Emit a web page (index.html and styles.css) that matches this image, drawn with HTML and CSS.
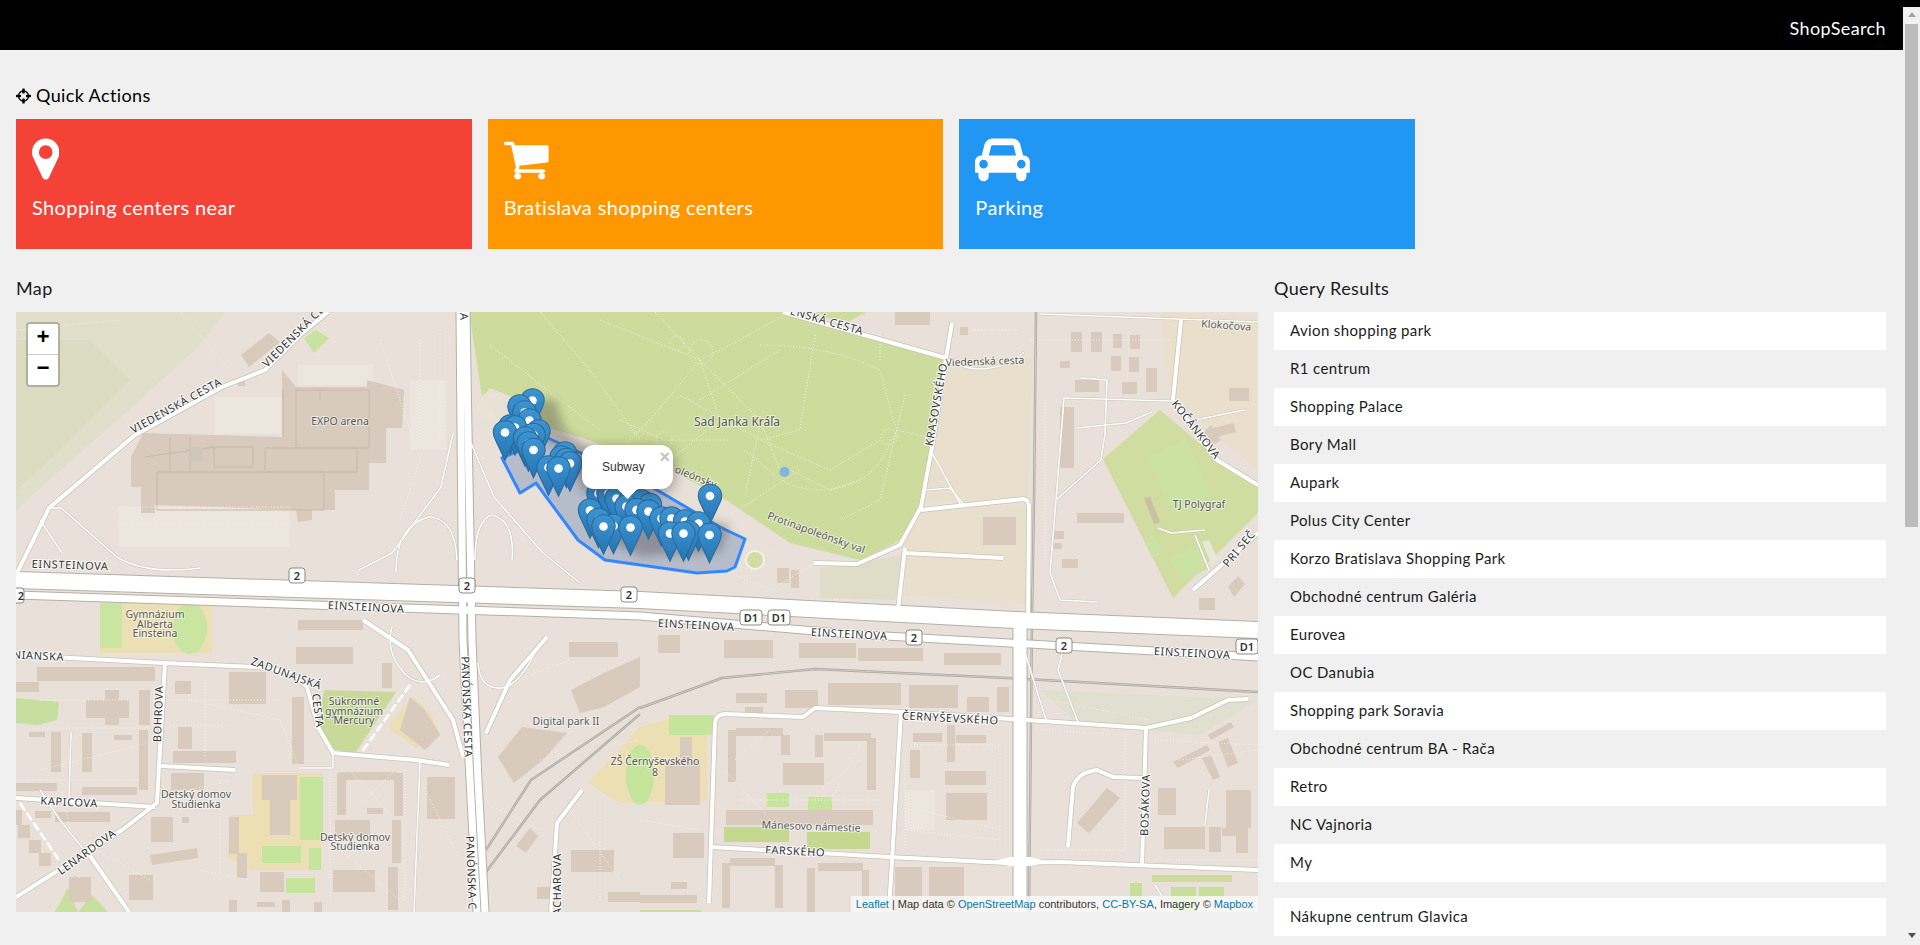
FILE: index.html
```html
<!DOCTYPE html>
<html>
<head>
    <meta charset="utf-8">
    <title>ShopSearch</title>
    <link rel="stylesheet" href="styles.css">
</head>

<body>
<div class="page">
    <header class="topbar"><span>ShopSearch</span></header>

    <main class="content">
        <h5 class="quick_title">
            <svg class="quick_icon" viewBox="0 0 1536 1792"><path d="M1197 1024h-109q-26 0-45-19t-19-45v-128q0-26 19-45t45-19h109q-32-108-112.500-188.500t-188.500-112.500v109q0 26-19 45t-45 19h-128q-26 0-45-19t-19-45v-109q-108 32-188.500 112.500t-112.500 188.500h109q26 0 45 19t19 45v128q0 26-19 45t-45 19h-109q32 108 112.500 188.500t188.500 112.500v-109q0-26 19-45t45-19h128q26 0 45 19t19 45v109q108-32 188.500-112.500t112.500-188.500zm339-192v128q0 26-19 45t-45 19h-143q-37 161-154.500 278.500t-278.500 154.500v143q0 26-19 45t-45 19h-128q-26 0-45-19t-19-45v-143q-161-37-278.500-154.500t-154.500-278.500h-143q-26 0-45-19t-19-45v-128q0-26 19-45t45-19h143q37-161 154.500-278.500t278.500-154.500v-143q0-26 19-45t45-19h128q26 0 45 19t19 45v143q161 37 278.500 154.500t154.500 278.500h143q26 0 45 19t19 45z"/></svg>
            Quick Actions
        </h5>

        <div class="cards">
            <div class="card card_red">
                <svg class="card_icon" viewBox="0 0 1024 1792"><path d="M768 640q0-106-75-181t-181-75-181 75-75 181 75 181 181 75 181-75 75-181zm256 0q0 109-33 179l-364 774q-16 33-47.500 52t-67.500 19-67.500-19-46.500-52l-365-774q-33-70-33-179 0-212 150-362t362-150 362 150 150 362z"/></svg>
                <h4>Shopping centers near</h4>
            </div>
            <div class="card card_orange">
                <svg class="card_icon" viewBox="64 0 1792 1792"><path d="M704 1536q0 52-38 90t-90 38-90-38-38-90 38-90 90-38 90 38 38 90zm896 0q0 52-38 90t-90 38-90-38-38-90 38-90 90-38 90 38 38 90zm128-1088v512q0 24-16.500 42.500t-40.500 21.500l-1044 122q13 60 13 70 0 16-24 64h920q26 0 45 19t19 45-19 45-45 19h-1024q-26 0-45-19t-19-45q0-11 8-31.500t16-36 21.500-40 15.500-29.500l-177-823h-204q-26 0-45-19t-19-45 19-45 45-19h256q16 0 28.500 6.500t19.500 15.500 13 24.500 8 26 5.500 29.500 4.500 26h1201q26 0 45 19t19 45z"/></svg>
                <h4>Bratislava shopping centers</h4>
            </div>
            <div class="card card_blue">
                <svg class="card_icon" viewBox="0 0 2048 1792"><path d="M480 1088q0-66-47-113t-113-47-113 47-47 113 47 113 113 47 113-47 47-113zm36-320h1016l-89-357q-2-8-14-17.500t-21-9.500h-768q-9 0-21 9.500t-14 17.500zm1372 320q0-66-47-113t-113-47-113 47-47 113 47 113 113 47 113-47 47-113zm160-96v384q0 14-9 23t-23 9h-96v128q0 80-56 136t-136 56-136-56-56-136v-128h-1024v128q0 80-56 136t-136 56-136-56-56-136v-128h-96q-14 0-23-9t-9-23v-384q0-93 65.500-158.500t158.500-65.500h28l105-419q23-94 104-157.500t179-63.500h768q98 0 179 63.500t104 157.500l105 419h28q93 0 158.500 65.500t65.500 158.500z"/></svg>
                <h4>Parking</h4>
            </div>
        </div>

        <div class="columns">
            <section>
                <h5 class="section_title">Map</h5>
                <div class="map">
                    <svg class="map_tiles" viewBox="16 312 1242 600">
                        <defs>
                            <linearGradient id="pin_fill" x1="0" y1="0" x2="0" y2="1">
                                <stop offset="0" stop-color="#3d94d1"/>
                                <stop offset="1" stop-color="#2574b4"/>
                            </linearGradient>
                            <filter id="soft"><feGaussianBlur stdDeviation="5"/></filter>
                            <g id="pin">
                                <path d="M12.500 .8C5.800 .8 .8 6 .8 12.500c0 2.800 1 5.200 2.300 7.700L12.500 40.300l9.400-20.100c1.300-2.500 2.300-4.900 2.300-7.700C24.200 6 19.200 .8 12.500 .8z" fill="url(#pin_fill)" stroke="#2a6a9c" stroke-width="1.100"/>
                                <circle cx="12.500" cy="12.500" r="4.300" fill="#fff"/>
                            </g>
                            <g id="roads_major">
                                <path d="M16 580L640 600L1015 620L1258 630"/>
                            </g>
                            <g id="roads_major2">
                                <path d="M16 595L640 616L850 634L1064 646L1190 653L1258 657"/>
                                <path d="M460 312L461 430L463 640L470 780L477 912"/>
                                <path d="M466 312L468 430L472 640L478 780L485 912"/>
                                <path d="M1017 620L1017 912"/>
                                <path d="M1023 620L1023 912"/>
                            </g>
                            <g id="roads_mid">
                                <path d="M16 575L49 508L135 435L222 387L265 370L300 335L328 312"/>
                                <path d="M783 312L946 358"/>
                                <path d="M952 323L946 358L932 447L921 507L900 545L857 564L814 563"/>
                                <path d="M921 510L967 505L1024 499Q1029 500 1029 508L1028 620"/>
                                <path d="M905 548L898 610"/>
                                <path d="M905 553L1003 558"/>
                                <path d="M16 655L163 663L257 667L290 672L307 687L318 727L333 753L416 760L449 765"/>
                                <path d="M165 663L159 767L157 803L122 830L16 897"/>
                                <path d="M16 798L155 807"/>
                                <path d="M161 766L235 770"/>
                                <path d="M711 847L889 857L1007 863L1060 862L1258 870"/>
                                <path d="M709 903L715 723Q716 714 725 714L803 717L815 708L901 712L1011 719L1146 728L1191 718L1228 700L1248 699"/>
                                <path d="M901 712L889 910"/>
                                <path d="M1146 728L1142 865"/>
                                <path d="M1068 847L1073 787Q1078 772 1097 770L1113 777L1142 778"/>
                                <path d="M1181 320L1173 400L1217 460L1258 485"/>
                                <path d="M1258 533L1193 590"/>
                                <path d="M363 620L408 650L453 720L463 757"/>
                                <path d="M547 637L510 680L486 733"/>
                                <path d="M582 790L557 823L551 912"/>
                                <path d="M88 853L129 912"/>
                            </g>
                            <g id="roads_minor">
                                <path d="M49 508L61 508L118 558Q150 575 200 568"/>
                                <path d="M40 520L62 553"/>
                                <path d="M453 433L441 487L392 553L359 570"/>
                                <path d="M471 443L494 497L543 553L580 583"/>
                                <path d="M396 572Q396 525 429 517Q455 518 457 560"/>
                                <path d="M475 560Q475 520 492 515Q515 520 512 560"/>
                                <path d="M392 627Q385 650 403 672Q420 690 440 675"/>
                                <path d="M478 663Q480 690 502 688Q520 685 536 650"/>
                                <path d="M300 768L333 768L333 753"/>
                                <path d="M71 732L69 797"/>
                                <path d="M420 762L414 912"/>
                                <path d="M948 360Q970 372 990 368Q1010 365 1024 352"/>
                                <path d="M1040 314L1258 322"/>
                                <path d="M1021 640L1046 720"/>
                                <path d="M1055 640L1064 645L1058 670L1078 722"/>
                                <path d="M1209 790L1205 825"/>
                                <path d="M1155 885L1172 912"/>
                                <path d="M88 855L60 820L40 790"/>
                                <path d="M926 490L950 488L966 507"/>
                                <path d="M932 453L962 507"/>
                                <path d="M1064 398L1171 401"/>
                                <path d="M1064 398L1056 500L1050 573L1060 600L1097 602"/>
                                <path d="M1081 378L1107 380L1105 433L1101 460L1056 500"/>
                                <path d="M1077 428L1126 423L1152 412"/>
                                <path d="M1195 420L1244 410"/>
                                <path d="M1158 528L1171 533L1205 530"/>
                                <path d="M1195 535L1209 570"/>
                            </g>
                        </defs>

                        <rect x="16" y="312" width="1242" height="600" fill="#e8e0d9"/>

                        <!-- landuse -->
                        <polygon points="16,312 225,312 200,345 140,400 60,470 16,510" fill="#e1dec9"/>
                        <polygon points="16,340 90,340 130,380 60,450 16,490" fill="#dcdcc2"/>
                        <polygon points="946,358 1032,358 1028,500 925,503" fill="#e8e0cd"/>
                        <polygon points="905,510 1028,505 1028,605 905,595" fill="#e8e0cd"/>
                        <polygon points="820,568 905,555 895,600 820,598" fill="#dfdcc8"/>
                        <polygon points="1160,312 1258,318 1258,470 1170,395" fill="#eadfca"/>
                        <polygon points="1040,690 1258,700 1200,735 1080,725" fill="#e1dfd0"/>
                        <polygon points="469,312 783,312 946,358 932,447 926,470 921,507 901,540 860,560 790,543 726,500 689,480 670,470 583,438 547,427 515,398 490,388 482,397" fill="#cddb9c"/>
                        <polygon points="805,312 866,312 850,321 825,318" fill="#cddb9c"/>
                        <ellipse cx="490" cy="407" rx="13" ry="14" fill="#e9e3d4"/>
                        <polygon points="515,398 490,402 505,430 548,445 600,470 680,515 760,545 795,555 740,530 680,490 610,450 548,430" fill="#e7e1d5"/>
                        <polygon points="1103,459 1160,410 1211,453 1258,487 1258,513 1173,598" fill="#d1dca0"/>
                        <polygon points="1146,458 1186,438 1211,495 1175,517" fill="#cbe2a4"/>
                        <polygon points="1168,558 1199,543 1209,568 1183,582" fill="#cbe2a4"/>
                        <polygon points="1144,538 1154,535 1162,553 1152,558" fill="#cbe2a4"/>
                        <polygon points="1202,542 1209,540 1218,560 1211,563" fill="#e8e8d8"/>
                        <polygon points="1144,498 1150,497 1160,522 1154,524" fill="#c9bfa5"/>
                        <circle cx="755" cy="560" r="9" fill="#d3dca5" stroke="#f4f1ea" stroke-width="2"/>
                        <ellipse cx="784.500" cy="472" rx="5" ry="5" fill="#7db5e3"/>
                        <rect x="100" y="603" width="112" height="50" fill="#ecdfb4"/>
                        <rect x="100" y="603" width="22" height="45" fill="#c9e5a0"/>
                        <ellipse cx="190" cy="628" rx="17" ry="26" fill="#c9e5a0"/>
                        <polygon points="324,690 396,692 355,753 327,748 318,727" fill="#c8d99a"/>
                        <polygon points="388,727 412,697 429,710 439,733 416,748" fill="#ecdfb4"/>
                        <polygon points="16,698 59,702 57,720 37,725 16,723" fill="#c6df9e"/>
                        <polygon points="253,773 322,773 322,870 253,870 227,857 231,815 253,815" fill="#ecdfb4"/>
                        <rect x="300" y="777" width="23" height="63" fill="#c6e59c"/>
                        <rect x="262" y="846" width="39" height="17" fill="#c6e59c"/>
                        <rect x="309" y="848" width="12" height="22" fill="#c6e59c"/>
                        <rect x="286" y="878" width="29" height="15" fill="#c6e59c"/>
                        <polygon points="55,912 68,888 78,912" fill="#c8df9e"/>
                        <polygon points="78,912 92,895 108,912" fill="#c8df9e"/>
                        <polygon points="588,783 640,727 681,715 707,720 707,800 620,803" fill="#ecdfb4"/>
                        <ellipse cx="640" cy="775" rx="14" ry="30" fill="#c6e59c"/>
                        <rect x="669" y="715" width="45" height="20" fill="#c6e59c"/>
                        <rect x="767" y="793" width="22" height="14" fill="#c6e59c"/>
                        <rect x="808" y="797" width="24" height="15" fill="#c6e59c"/>
                        <rect x="724" y="827" width="65" height="15" fill="#c5d88f"/>
                        <rect x="807" y="832" width="63" height="17" fill="#c5d88f"/>
                        <rect x="1152" y="875" width="80" height="7" fill="#cddb9c"/>
                        <rect x="1130" y="883" width="12" height="20" fill="#c6e09c"/>
                        <rect x="1171" y="887" width="25" height="25" fill="#c6e09c"/>
                        <rect x="1199" y="887" width="25" height="10" fill="#c6e09c"/>
                        <rect x="640" y="910" width="61" height="2" fill="#cddb9c"/>
                        <polygon points="304,338 316,330 329,338 314,353" fill="#c8e29f"/>

                        <!-- paved light areas -->
                        <g fill="#ece6de">
                            <rect x="118" y="507" width="172" height="40"/>
                            <rect x="214" y="397" width="80" height="37"/>
                            <rect x="298" y="365" width="75" height="20"/>
                            <rect x="410" y="380" width="36" height="70"/>
                            <rect x="905" y="790" width="30" height="40"/>
                        </g>

                        <!-- buildings -->
                        <g fill="#d8cabc">
                            <polygon points="131,457 143,433 282,437 282,370 296,387 367,387 367,380 404,390 402,428 386,428 386,463 369,463 369,490 335,490 335,510 312,510 312,520 298,522 296,510 155,505 155,513 141,513 141,487 131,487"/>
                            <polygon points="241,355 269,333 280,342 249,367"/>
                            <rect x="238" y="378" width="7" height="8"/>
                            <rect x="1071" y="332" width="11" height="20"/><rect x="1091" y="332" width="11" height="20"/>
                            <rect x="1113" y="334" width="9" height="14"/><rect x="1130" y="335" width="10" height="14"/>
                            <rect x="1111" y="356" width="10" height="15"/><rect x="1129" y="357" width="10" height="15"/>
                            <rect x="1060" y="361" width="10" height="7"/><rect x="1146" y="368" width="11" height="24"/>
                            <rect x="1075" y="380" width="24" height="12"/><rect x="1122" y="382" width="15" height="12"/>
                            <rect x="1229" y="388" width="20" height="13"/><rect x="1060" y="407" width="14" height="61"/>
                            <rect x="1077" y="513" width="47" height="10"/><rect x="1054" y="531" width="10" height="8"/>
                            <rect x="1054" y="543" width="8" height="6"/><rect x="1062" y="559" width="16" height="9"/>
                            <rect x="983" y="517" width="33" height="28"/><rect x="777" y="568" width="12" height="15"/>
                            <rect x="791" y="570" width="8" height="18"/><rect x="1199" y="598" width="16" height="12"/>
                            <rect x="895" y="312" width="35" height="13"/><rect x="960" y="327" width="8" height="8"/>
                            <polygon points="1203,433 1211,425 1221,440 1212,446"/><polygon points="1213,428 1234,423 1236,432 1216,437"/>
                            <polygon points="1228,587 1238,576 1245,584 1234,597"/>
                            <rect x="37" y="667" width="118" height="14"/><rect x="16" y="682" width="23" height="10"/>
                            <rect x="175" y="681" width="16" height="13"/><rect x="229" y="672" width="37" height="32"/>
                            <rect x="292" y="697" width="12" height="67"/><rect x="139" y="690" width="11" height="35"/>
                            <rect x="86" y="700" width="43" height="18"/><rect x="105" y="690" width="14" height="35"/>
                            <rect x="51" y="732" width="10" height="40"/><rect x="82" y="733" width="10" height="39"/>
                            <rect x="29" y="732" width="16" height="5"/><rect x="114" y="735" width="18" height="5"/>
                            <rect x="139" y="730" width="9" height="60"/><rect x="173" y="751" width="63" height="12"/>
                            <rect x="178" y="727" width="14" height="22"/><rect x="16" y="783" width="41" height="8"/>
                            <rect x="82" y="787" width="55" height="8"/><rect x="171" y="773" width="33" height="17"/>
                            <rect x="55" y="812" width="55" height="10"/><rect x="35" y="811" width="16" height="7"/>
                            <rect x="16" y="810" width="6" height="15"/><rect x="151" y="817" width="22" height="25"/>
                            <rect x="182" y="817" width="7" height="6"/>
                            <polygon points="150,855 197,848 198,858 152,865"/>
                            <rect x="18" y="825" width="12" height="13"/><rect x="29" y="840" width="12" height="13"/><rect x="39" y="853" width="12" height="13"/>
                            <rect x="262" y="775" width="35" height="25"/><rect x="270" y="800" width="20" height="35"/>
                            <rect x="229" y="817" width="10" height="37"/><rect x="237" y="853" width="10" height="25"/>
                            <rect x="260" y="872" width="24" height="20"/>
                            <rect x="339" y="772" width="57" height="8"/><rect x="337" y="773" width="9" height="42"/><rect x="394" y="773" width="9" height="43"/>
                            <rect x="392" y="820" width="9" height="43"/><rect x="388" y="867" width="10" height="43"/>
                            <rect x="335" y="820" width="35" height="15"/><rect x="367" y="808" width="16" height="6"/>
                            <rect x="333" y="870" width="42" height="22"/><rect x="427" y="777" width="28" height="42"/>
                            <rect x="69" y="877" width="22" height="25"/><rect x="129" y="875" width="24" height="25"/>
                            <rect x="229" y="900" width="8" height="12"/><rect x="257" y="902" width="18" height="5"/>
                            <rect x="282" y="900" width="8" height="12"/><rect x="314" y="902" width="8" height="10"/>
                            <rect x="298" y="620" width="65" height="10"/><rect x="296" y="647" width="57" height="17"/>
                            <rect x="382" y="663" width="10" height="25"/>
                            <polygon points="410,697 425,710 440,735 425,750 400,730"/>
                            <rect x="569" y="642" width="49" height="15"/>
                            <polygon points="498,757 522,727 567,733 543,760 514,783"/>
                            <polygon points="571,690 604,673 640,657 640,687 604,707 580,713"/>
                            <polygon points="516,846 530,828 538,836 526,853"/>
                            <rect x="571" y="850" width="43" height="22"/><rect x="537" y="887" width="14" height="12"/>
                            <rect x="608" y="892" width="32" height="10"/>
                            <rect x="658" y="635" width="22" height="18"/><rect x="724" y="640" width="49" height="18"/>
                            <rect x="799" y="643" width="57" height="15"/><rect x="858" y="648" width="65" height="13"/>
                            <rect x="944" y="653" width="57" height="12"/><rect x="736" y="693" width="31" height="10"/>
                            <rect x="785" y="690" width="33" height="18"/><rect x="828" y="683" width="73" height="22"/>
                            <rect x="909" y="685" width="49" height="23"/><rect x="967" y="697" width="22" height="15"/>
                            <rect x="997" y="687" width="12" height="25"/><rect x="745" y="707" width="18" height="7"/>
                            <rect x="728" y="730" width="8" height="52"/><rect x="736" y="728" width="47" height="8"/><rect x="781" y="735" width="9" height="20"/>
                            <rect x="815" y="735" width="8" height="22"/><rect x="824" y="733" width="47" height="8"/><rect x="867" y="738" width="9" height="52"/>
                            <rect x="783" y="763" width="41" height="22"/><rect x="913" y="733" width="29" height="9"/>
                            <rect x="956" y="735" width="30" height="8"/><rect x="947" y="725" width="8" height="37"/>
                            <rect x="910" y="750" width="10" height="28"/><rect x="945" y="771" width="41" height="14"/>
                            <rect x="946" y="793" width="41" height="27"/><rect x="726" y="810" width="147" height="15"/>
                            <rect x="673" y="833" width="31" height="25"/><rect x="671" y="882" width="16" height="7"/>
                            <rect x="722" y="863" width="8" height="45"/><rect x="730" y="858" width="45" height="8"/><rect x="775" y="865" width="8" height="43"/>
                            <rect x="807" y="868" width="8" height="44"/><rect x="818" y="863" width="45" height="8"/><rect x="862" y="870" width="7" height="42"/>
                            <rect x="895" y="867" width="27" height="45"/><rect x="929" y="867" width="35" height="45"/>
                            <rect x="640" y="895" width="57" height="8"/><rect x="1164" y="827" width="41" height="22"/>
                            <rect x="1209" y="827" width="12" height="25"/><rect x="1222" y="828" width="16" height="8"/><rect x="1236" y="828" width="12" height="25"/>
                            <rect x="1226" y="790" width="25" height="38"/><rect x="1158" y="788" width="18" height="27"/>
                            <polygon points="1077,823 1107,788 1120,798 1089,833"/>
                            <polygon points="1173,762 1207,745 1210,750 1178,768"/><polygon points="1208,735 1231,722 1234,727 1211,740"/>
                            <polygon points="1218,742 1228,738 1238,763 1228,767"/><polygon points="1202,758 1211,755 1220,777 1213,780"/>
                            <rect x="665" y="760" width="35" height="45"/><rect x="680" y="737" width="12" height="30"/>
                        </g>
                        <!-- outlines inside the arena -->
                        <g class="outline">
                            <rect x="157" y="472" width="167" height="38"/>
                            <rect x="214" y="447" width="39" height="20"/>
                            <rect x="265" y="448" width="92" height="24"/>
                            <rect x="296" y="390" width="73" height="58"/>
                            <path d="M145 457L214 447M170 437L170 472M190 437L190 472"/>
                            <path d="M320 400L320 390M283 437L283 390"/>
                        </g>
                        <rect x="190" y="447" width="12" height="15" fill="#cfc6bc"/>

                        <!-- footpaths -->
                        <g class="footpath">
                            <path d="M490 345L560 400L600 430M540 312L590 370L640 440M600 320L700 360L760 420L780 470M655 312L700 360L730 345L790 312"/>
                            <path d="M700 360L650 420L620 450M700 360L720 420L670 460"/>
                            <path d="M760 345Q830 345 880 370Q890 410 897 430Q880 470 860 480Q820 500 780 480L745 450"/>
                            <path d="M680 395L760 440L830 470L880 440M700 400L780 350M815 335L800 430L760 440"/>
                            <path d="M760 425L745 495M790 470L830 490L860 480M905 395L880 500L840 520"/>
                            <circle cx="677" cy="343" r="7"/><circle cx="701" cy="352" r="12"/>
                            <circle cx="664" cy="440" r="8"/><circle cx="889" cy="437" r="8"/>
                            <path d="M620 420L664 440L730 440M897 430L940 440M730 515L800 470"/>
                            <path d="M16 330L120 320M180 312L230 370M380 340L420 460L400 520"/>
                            <path d="M118 507L290 507M118 525L290 525M440 330L440 440M420 340L420 440"/>
                            <path d="M40 700L130 700M190 700L280 720L300 770M40 770L160 740M420 780L460 860"/>
                            <path d="M190 790L230 780M340 850L400 900M200 870L250 880M60 780L80 880"/>
                            <path d="M170 700L280 700M170 725L225 725M30 728L150 728M20 780L140 780M205 680L205 760M60 830L150 880"/>
                            <path d="M220 780L220 880M330 760L330 900M405 770L405 900M345 820L395 770M350 770L390 815"/>
                            <path d="M735 760L770 730M860 760L820 790M740 800L880 800M905 760L905 850M920 810L1000 830"/>
                            <path d="M1050 700L1150 720M1180 760L1258 750M1050 640L1240 660M1030 340L1180 340M1045 400L1045 560"/>
                            <path d="M570 810L620 880M480 800L540 830M600 800L600 900M640 820L700 830M540 760L640 740M490 690L570 660"/>
                            <path d="M780 600L850 600M700 560L770 590L820 560M880 360L880 330M972 330L1020 330"/>
                            <path d="M1030 725L1030 860M1040 850L1125 850L1125 735M1155 740L1258 745M1040 730L1130 735M1155 860L1258 860"/>
                            <path d="M725 770L780 830M860 745L830 800M905 830L1000 840M905 745L1000 745M1000 745L1000 850"/>
                        </g>

                        <!-- rail -->
                        <path class="rail" d="M640 708L722 678L815 669L1007 678L1258 692"/>
                        <path class="rail" d="M486 850L531 780L640 707"/>
                        <path class="rail" d="M480 880L540 800L640 714"/>
                        <path class="rail" d="M1036 312L1034 500L1032 620L1029 912"/>
                        <path class="rail_inner" d="M640 708L722 678L815 669L1007 678L1258 692"/>
                        <path class="rail_inner" d="M486 850L531 780L640 707"/>
                        <path class="rail_inner" d="M480 880L540 800L640 714"/>
                        <path class="rail_inner" d="M1036 312L1034 500L1032 620L1029 912"/>

                        <!-- roads -->
                        <use href="#roads_minor" class="casing casing_minor"/>
                        <use href="#roads_mid" class="casing casing_mid"/>
                        <use href="#roads_major2" class="casing casing_major2"/>
                        <use href="#roads_major" class="casing casing_major"/>
                        <use href="#roads_minor" class="road road_minor"/>
                        <use href="#roads_mid" class="road road_mid"/>
                        <use href="#roads_major2" class="road road_major2"/>
                        <use href="#roads_major" class="road road_major"/>
                        <polygon points="990,862 1010,857 1030,857 1050,862 1030,866 1010,866" fill="#fff"/>
                        <path class="dashes" d="M410 685L361 753"/>
                        <path class="dashes" d="M20 803L59 860"/>

                        <!-- labels -->
                        <g class="label">
                            <text transform="translate(178 409) rotate(-29)" class="caps">VIEDENSKÁ CESTA</text>
                            <text transform="translate(267 368) rotate(-45)" class="caps start">VIEDENSKÁ CE</text>
                            <text transform="translate(862 335) rotate(16)" class="caps end">ENSKÁ CESTA</text>
                            <text x="340" y="425">EXPO arena</text>
                            <text x="737" y="426" class="park_name">Sad Janka Kráľa</text>
                            <text transform="translate(940 405) rotate(-80)" class="caps">KRASOVSKÉHO</text>
                            <text transform="translate(985 365) rotate(-2)">Viedenská cesta</text>
                            <text transform="translate(1226 329) rotate(4)">Klokočova</text>
                            <text transform="translate(1193 432) rotate(52)" class="caps">KOČÁNKOVA</text>
                            <text x="1199" y="508">TJ Polygraf</text>
                            <text transform="translate(1242 551) rotate(-50)" class="caps">PRI SEČ</text>
                            <text transform="translate(815 536) rotate(20)">Protinapoleónsky val</text>
                            <text transform="translate(674 472) rotate(22)" class="start">oleónsky</text>
                            <text transform="translate(70 569) rotate(2)" class="caps">EINSTEINOVA</text>
                            <text transform="translate(366 611) rotate(3)" class="caps">EINSTEINOVA</text>
                            <text transform="translate(696 629) rotate(3)" class="caps">EINSTEINOVA</text>
                            <text transform="translate(849 638) rotate(3)" class="caps">EINSTEINOVA</text>
                            <text transform="translate(1192 657) rotate(3)" class="caps">EINSTEINOVA</text>
                            <text x="155" y="618">Gymnázium</text>
                            <text x="155" y="628">Alberta</text>
                            <text x="155" y="637">Einsteina</text>
                            <text transform="translate(285 677) rotate(20)" class="caps">ZADUNAJSKÁ</text>
                            <text transform="translate(314 711) rotate(83)" class="caps">CESTA</text>
                            <text transform="translate(162 714) rotate(-88)" class="caps">BOHROVA</text>
                            <text transform="translate(64 661) rotate(3)" class="caps end">NIANSKA</text>
                            <text x="354" y="705">Súkromné</text>
                            <text x="354" y="714.500">gymnázium</text>
                            <text x="354" y="724">Mercury</text>
                            <text x="196" y="798">Detský domov</text>
                            <text x="196" y="807.500">Studienka</text>
                            <text x="355" y="841">Detský domov</text>
                            <text x="355" y="850">Studienka</text>
                            <text transform="translate(69 806) rotate(3)" class="caps">KAPICOVA</text>
                            <text transform="translate(89 855) rotate(-36)" class="caps">LENARDOVA</text>
                            <text x="566" y="725">Digital park II</text>
                            <text x="655" y="765">ZŠ Černyševského</text>
                            <text x="655" y="776">8</text>
                            <text transform="translate(463 707) rotate(88)" class="caps">PANÓNSKA CESTA</text>
                            <text transform="translate(460 313) rotate(88)" class="caps start">A</text>
                            <text transform="translate(466 836) rotate(88)" class="caps start">PANÓNSKA C</text>
                            <text transform="translate(561 853) rotate(-90)" class="caps end">ACHAROVA</text>
                            <text transform="translate(950 722) rotate(3)" class="caps">ČERNYŠEVSKÉHO</text>
                            <text transform="translate(811 830) rotate(2)">Mánesovo námestie</text>
                            <text transform="translate(795 855) rotate(3)" class="caps">FARSKÉHO</text>
                            <text transform="translate(1149 805) rotate(-88)" class="caps">BOSÁKOVA</text>
                        </g>

                        <!-- road shields -->
                        <g class="shield">
                            <rect x="289" y="568" width="16" height="15" rx="3"/><text x="297" y="580">2</text>
                            <rect x="459" y="578" width="16" height="15" rx="3"/><text x="467" y="590">2</text>
                            <rect x="621" y="587" width="16" height="15" rx="3"/><text x="629" y="599">2</text>
                            <rect x="8" y="588" width="16" height="15" rx="3"/><text x="21" y="600">2</text>
                            <rect x="906" y="630" width="16" height="15" rx="3"/><text x="914" y="642">2</text>
                            <rect x="1056" y="638" width="16" height="15" rx="3"/><text x="1064" y="650">2</text>
                            <rect x="740" y="610" width="22" height="15" rx="3"/><text x="751" y="622">D1</text>
                            <rect x="768" y="610" width="22" height="15" rx="3"/><text x="779" y="622">D1</text>
                            <rect x="1236" y="639" width="22" height="15" rx="3"/><text x="1247" y="651">D1</text>
                        </g>

                        <!-- shape and markers -->
                        <polygon class="area" points="502,458 520,493 536,483 578,540 605,560 697,573 727,571 735,567 745,539 720,527 640,480 548,438"/>
                        <g filter="url(#soft)" fill="#4a4a4a" opacity=".38">
                            <polygon points="530,400 555,400 565,430 590,450 580,480 550,440 525,440"/>
                            <polygon points="605,540 640,510 700,520 730,525 720,552 640,556"/>
                        </g>
                        <use href="#pin" x="520" y="388"/><use href="#pin" x="507" y="394"/><use href="#pin" x="512" y="400"/>
                        <use href="#pin" x="517" y="408"/><use href="#pin" x="498" y="414"/><use href="#pin" x="502.500" y="415"/>
                        <use href="#pin" x="526" y="419"/><use href="#pin" x="492.500" y="420"/><use href="#pin" x="521" y="422.500"/>
                        <use href="#pin" x="512.500" y="426"/><use href="#pin" x="516" y="431"/><use href="#pin" x="521" y="437.500"/>
                        <use href="#pin" x="552.500" y="441"/><use href="#pin" x="549" y="445"/><use href="#pin" x="554" y="447.500"/>
                        <use href="#pin" x="557.500" y="451"/><use href="#pin" x="536" y="455"/><use href="#pin" x="546" y="456"/>
                        <use href="#pin" x="586" y="481"/><use href="#pin" x="596" y="481"/><use href="#pin" x="697.500" y="483.500"/>
                        <use href="#pin" x="604" y="486"/><use href="#pin" x="617.500" y="489"/><use href="#pin" x="629" y="489"/>
                        <use href="#pin" x="637.500" y="492.500"/><use href="#pin" x="614" y="494"/><use href="#pin" x="624" y="497.500"/>
                        <use href="#pin" x="577.500" y="498"/><use href="#pin" x="636" y="499"/>
                        <use href="#pin" x="649" y="506"/><use href="#pin" x="659" y="506"/><use href="#pin" x="586" y="507.500"/>
                        <use href="#pin" x="672.500" y="509"/><use href="#pin" x="686" y="511"/><use href="#pin" x="601" y="513.500"/>
                        <use href="#pin" x="591" y="514"/><use href="#pin" x="618" y="515"/><use href="#pin" x="676" y="520"/>
                        <use href="#pin" x="657.500" y="521"/><use href="#pin" x="671" y="521"/><use href="#pin" x="697" y="522.500"/>
                    </svg>

                    <div class="zoom_box">
                        <a class="zoom_btn zoom_in">+</a>
                        <a class="zoom_btn">&#8722;</a>
                    </div>

                    <div class="popup">
                        <div class="popup_tip"></div>
                        <span class="popup_close">&#215;</span>
                        <p>Subway</p>
                    </div>

                    <div class="attribution"><a>Leaflet</a> | Map data &copy; <a>OpenStreetMap</a> contributors, <a>CC-BY-SA</a>, Imagery &copy; <a>Mapbox</a></div>
                </div>
            </section>

            <section>
                <h5 class="section_title">Query Results</h5>
                <ul class="results">
                    <li>Avion shopping park</li>
                    <li>R1 centrum</li>
                    <li>Shopping Palace</li>
                    <li>Bory Mall</li>
                    <li>Aupark</li>
                    <li>Polus City Center</li>
                    <li>Korzo Bratislava Shopping Park</li>
                    <li>Obchodné centrum Galéria</li>
                    <li>Eurovea</li>
                    <li>OC Danubia</li>
                    <li>Shopping park Soravia</li>
                    <li>Obchodné centrum BA - Rača</li>
                    <li>Retro</li>
                    <li>NC Vajnoria</li>
                    <li>My</li>
                    <li></li>
                    <li>Nákupne centrum Glavica</li>
                </ul>
            </section>
        </div>
    </main>
</div>

<div class="scrollbar">
    <div class="scroll_up"></div>
    <div class="scroll_track"><div class="scroll_thumb"></div></div>
    <div class="scroll_down"></div>
</div>
</body>
</html>
```

FILE: styles.css
```css
html, body {
    margin: 0;
    height: 945px;
    overflow: hidden;
}

body {
    display: flex;
    background-color: #f0f0f0;
    font-family: "Lato", "Open Sans", sans-serif;
    font-size: 15px;
    letter-spacing: .025em;
    color: #1c1c1c;
}

.page {
    width: 1903px;
    flex: none;
}

.topbar {
    height: 50px;
    background-color: #000;
    color: #fff;
    font-size: 18px;
    line-height: 56px;
    text-align: right;
    padding-right: 17px;
    box-sizing: border-box;
}

.content {
    padding: 0 17px 0 16px;
}

.quick_title {
    margin: 32px 0 10px;
    height: 27px;
    font-size: 18px;
    line-height: 27px;
    font-weight: 400;
    color: #000;
    display: flex;
    align-items: center;
    gap: 5px;
}

.quick_icon {
    width: 15px;
    height: 18px;
    fill: #000;
}

.cards {
    display: grid;
    grid-template-columns: repeat(3, 455.67px);
    gap: 16px;
}

.card {
    height: 130px;
    box-sizing: border-box;
    padding: 16px;
    color: #fff;
}

.card_red { background-color: #f44336; }
.card_orange { background-color: #ff9800; }
.card_blue { background-color: #2196f3; }

.card_icon {
    display: block;
    height: 48px;
    fill: #fff;
}

.card h4 {
    margin: 9px 0 11px;
    font-size: 20px;
    line-height: 30px;
    font-weight: 400;
}

.columns {
    display: grid;
    grid-template-columns: 1242px 612px;
    gap: 16px;
}

.section_title {
    margin: 26px 0 10px;
    font-size: 18px;
    line-height: 27px;
    font-weight: 400;
}

/* map */
.map {
    position: relative;
    height: 600px;
    overflow: hidden;
    background-color: #e8e0d9;
    letter-spacing: 0;
}

.map_tiles {
    display: block;
    width: 1242px;
    height: 600px;
}

.casing, .road, .rail, .rail_inner, .footpath, .dashes, .outline {
    fill: none;
    stroke-linejoin: round;
}

.outline {
    stroke: #c8b9a9;
    stroke-width: 1;
}

.casing { stroke: #c9c3b7; }
.casing_major { stroke: #b5b0a6; stroke-width: 18; }
.casing_major2 { stroke: #b5b0a6; stroke-width: 9; }
.casing_mid { stroke-width: 5.5; }
.casing_minor { stroke-width: 2.6; }

.road { stroke: #fff; }
.road_major { stroke-width: 16; }
.road_major2 { stroke-width: 7; }
.road_mid { stroke-width: 4; }
.road_minor { stroke-width: 1.6; }

.rail {
    stroke: #a9a69f;
    stroke-width: 2.4;
}

.rail_inner {
    stroke: #dcd6cc;
    stroke-width: .8;
}

.footpath {
    stroke: #f6f3e8;
    stroke-width: 1;
    stroke-dasharray: 1 2;
}

.dashes {
    stroke: #fff;
    stroke-width: 2.5;
    stroke-dasharray: 9 3;
}

.label text {
    font-family: "Noto Sans", sans-serif;
    font-size: 10.5px;
    text-anchor: middle;
    fill: #5a5a5a;
    stroke: #fff;
    stroke-width: 2px;
    stroke-opacity: .55;
    paint-order: stroke;
}

.label text.caps {
    fill: #333;
    font-size: 11px;
    letter-spacing: .6px;
    stroke-opacity: .9;
}

.label text.park_name {
    font-size: 12px;
}

.label text.start { text-anchor: start; }
.label text.end { text-anchor: end; }

.shield rect {
    fill: #fff;
    stroke: #8d8a84;
}

.shield text {
    font-family: "Noto Sans", sans-serif;
    font-size: 11px;
    font-weight: 600;
    text-anchor: middle;
    fill: #333;
}

.area {
    fill: #b7bcca;
    stroke: #3388ff;
    stroke-width: 3;
    stroke-linejoin: round;
}

.zoom_box {
    position: absolute;
    left: 10px;
    top: 10px;
    border: 2px solid rgba(0, 0, 0, .2);
    border-radius: 4px;
    background-clip: padding-box;
}

.zoom_btn {
    display: block;
    width: 30px;
    height: 30px;
    background-color: #fff;
    border-bottom: 1px solid #ccc;
    font-family: "Liberation Mono", monospace;
    font-size: 22px;
    font-weight: 700;
    line-height: 30px;
    text-align: center;
    color: #000;
}

.zoom_btn.zoom_in {
    border-radius: 2px 2px 0 0;
}

.zoom_btn:last-child {
    border-bottom: 0;
    border-radius: 0 0 2px 2px;
}

.popup {
    position: absolute;
    left: 566px;
    top: 133px;
    width: 91px;
    height: 44px;
    box-sizing: border-box;
    background-color: #fff;
    border-radius: 12px;
    box-shadow: 0 3px 14px rgba(0, 0, 0, .4);
    font-family: "Liberation Sans", Arial, sans-serif;
    font-size: 12px;
    color: #333;
}

.popup p {
    position: relative;
    margin: 0;
    padding: 14px 0 0 20px;
    line-height: 16px;
}

.popup_close {
    position: absolute;
    right: 3px;
    top: 3px;
    font-size: 18px;
    font-weight: 700;
    line-height: 18px;
    color: #c3c3c3;
}

.popup_tip {
    position: absolute;
    left: 35.500px;
    top: 31px;
    width: 19px;
    height: 19px;
    transform: rotate(45deg);
    background-color: #fff;
}

.attribution {
    position: absolute;
    right: 0;
    bottom: 0;
    padding: 0 5px;
    background-color: rgba(255, 255, 255, .7);
    font-family: "Liberation Sans", Arial, sans-serif;
    font-size: 11px;
    line-height: 16.500px;
    color: #333;
}

.attribution a {
    color: #0078a8;
}

/* list */
.results {
    list-style: none;
    margin: 0;
    padding: 0;
}

.results li {
    padding: 7px 16px 9px;
    line-height: 22px;
}

.results li:empty {
    padding: 8px 16px;
    height: 0;
    line-height: 0;
}

.results li:nth-child(odd) {
    background-color: #fff;
}

/* scrollbar drawn beside the page */
.scrollbar {
    width: 17px;
    height: 945px;
    flex: none;
    box-sizing: border-box;
    border-top: 7px solid #000;
    background-color: #f1f1f1;
    display: flex;
    flex-direction: column;
    align-items: center;
}

.scroll_up, .scroll_down {
    width: 0;
    height: 0;
    border-left: 4px solid transparent;
    border-right: 4px solid transparent;
    flex: none;
}

.scroll_up {
    margin-top: 5px;
    border-bottom: 5px solid #a3a3a3;
}

.scroll_track {
    height: 503px;
    margin-top: 7px;
    width: 13px;
    flex: none;
}

.scroll_thumb {
    height: 100%;
    background-color: #bcbcbc;
}

.scroll_down {
    margin-top: 406px;
    border-top: 5px solid #505050;
}
```
